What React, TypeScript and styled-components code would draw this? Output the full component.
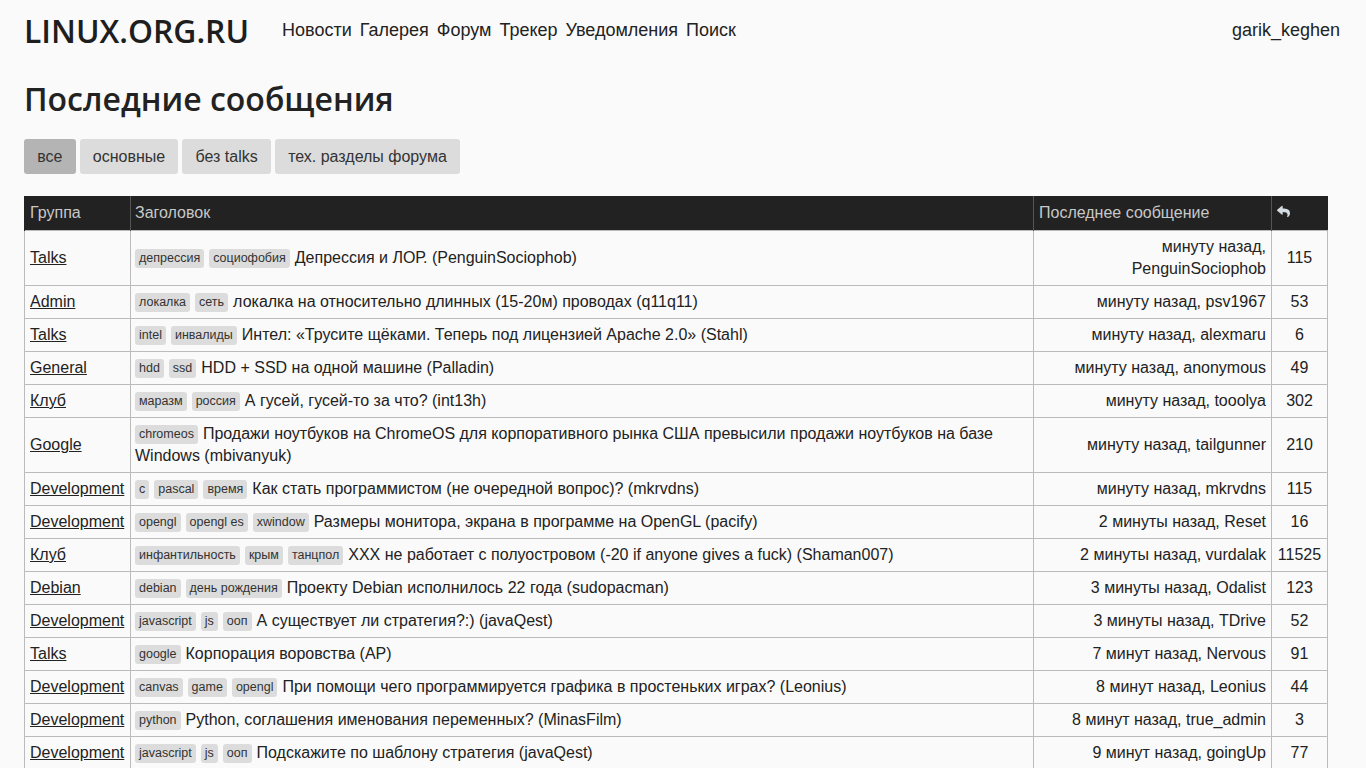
import styled, { createGlobalStyle } from "styled-components";
import { FaReply } from "react-icons/fa";

interface Topic {
  group: string;
  tags: string[];
  title: string;
  last: string;
  count: number;
}

const topics: Topic[] = [
  { group: "Talks", tags: ["депрессия", "социофобия"], title: "Депрессия и ЛОР. (PenguinSociophob)", last: "минуту назад, PenguinSociophob", count: 115 },
  { group: "Admin", tags: ["локалка", "сеть"], title: "локалка на относительно длинных (15-20м) проводах (q11q11)", last: "минуту назад, psv1967", count: 53 },
  { group: "Talks", tags: ["intel", "инвалиды"], title: "Интел: «Трусите щёками. Теперь под лицензией Apache 2.0» (Stahl)", last: "минуту назад, alexmaru", count: 6 },
  { group: "General", tags: ["hdd", "ssd"], title: "HDD + SSD на одной машине (Palladin)", last: "минуту назад, anonymous", count: 49 },
  { group: "Клуб", tags: ["маразм", "россия"], title: "А гусей, гусей-то за что? (int13h)", last: "минуту назад, tooolya", count: 302 },
  { group: "Google", tags: ["chromeos"], title: "Продажи ноутбуков на ChromeOS для корпоративного рынка США превысили продажи ноутбуков на базе Windows (mbivanyuk)", last: "минуту назад, tailgunner", count: 210 },
  { group: "Development", tags: ["c", "pascal", "время"], title: "Как стать программистом (не очередной вопрос)? (mkrvdns)", last: "минуту назад, mkrvdns", count: 115 },
  { group: "Development", tags: ["opengl", "opengl es", "xwindow"], title: "Размеры монитора, экрана в программе на OpenGL (pacify)", last: "2 минуты назад, Reset", count: 16 },
  { group: "Клуб", tags: ["инфантильность", "крым", "танцпол"], title: "XXX не работает с полуостровом (-20 if anyone gives a fuck) (Shaman007)", last: "2 минуты назад, vurdalak", count: 11525 },
  { group: "Debian", tags: ["debian", "день рождения"], title: "Проекту Debian исполнилось 22 года (sudopacman)", last: "3 минуты назад, Odalist", count: 123 },
  { group: "Development", tags: ["javascript", "js", "ооп"], title: "А существует ли стратегия?:) (javaQest)", last: "3 минуты назад, TDrive", count: 52 },
  { group: "Talks", tags: ["google"], title: "Корпорация воровства (AP)", last: "7 минут назад, Nervous", count: 91 },
  { group: "Development", tags: ["canvas", "game", "opengl"], title: "При помощи чего программируется графика в простеньких играх? (Leonius)", last: "8 минут назад, Leonius", count: 44 },
  { group: "Development", tags: ["python"], title: "Python, соглашения именования переменных? (MinasFilm)", last: "8 минут назад, true_admin", count: 3 },
  { group: "Development", tags: ["javascript", "js", "ооп"], title: "Подскажите по шаблону стратегия (javaQest)", last: "9 минут назад, goingUp", count: 77 },
  { group: "Linux-install", tags: ["ubuntu"], title: "Не загружается после обновления (vovan)", last: "10 минут назад, Deleted", count: 12 },
  { group: "Talks", tags: ["работа"], title: "Куда податься? (anonymous)", last: "11 минут назад, anonymous", count: 27 },
];

const filters = ["все", "основные", "без talks", "тех. разделы форума"];
const nav = ["Новости", "Галерея", "Форум", "Трекер", "Уведомления", "Поиск"];

export default function App() {
  return (
    <>
      <GlobalStyle />
      <Header>
        <Logo href="#">LINUX.ORG.RU</Logo>
        <Nav>
          {nav.map((n) => (
            <NavLink key={n} href="#">{n}</NavLink>
          ))}
        </Nav>
        <User href="#">garik_keghen</User>
      </Header>
      <Main>
        <Title>Последние сообщения</Title>
        <Filters>
          {filters.map((f, i) => (
            <FilterButton key={f} $active={i === 0}>{f}</FilterButton>
          ))}
        </Filters>
        <Table>
          <colgroup>
            <col style={{ width: 106 }} />
            <col />
            <col style={{ width: 238 }} />
            <col style={{ width: 56 }} />
          </colgroup>
          <thead>
            <tr>
              <Th>Группа</Th>
              <Th $tight>Заголовок</Th>
              <Th>Последнее сообщение</Th>
              <Th>
                <FaReply size={13} color="#d6dde2" />
              </Th>
            </tr>
          </thead>
          <tbody>
            {topics.map((t, i) => (
              <tr key={i}>
                <Td>
                  <GroupLink href="#">{t.group}</GroupLink>
                </Td>
                <Td $tight>
                  {t.tags.map((tag) => (
                    <Tag key={tag}>{tag}</Tag>
                  ))}
                  {t.title}
                </Td>
                <Td $align="right">{t.last}</Td>
                <Td $align="center">{t.count}</Td>
              </tr>
            ))}
          </tbody>
        </Table>
      </Main>
    </>
  );
}

const GlobalStyle = createGlobalStyle`
  body {
    margin: 0;
    background: #fafafa;
    color: #222;
    font-family: "Liberation Sans", Arial, sans-serif;
    font-size: 16px;
  }
  a {
    color: #222;
  }
`;

const Header = styled.header`
  display: flex;
  align-items: center;
  height: 60px;
  padding: 0 26px 0 24px;
`;

const Logo = styled.a`
  font-family: "Open Sans", sans-serif;
  font-size: 31.8px;
  font-weight: 600;
  text-decoration: none;
  color: #1e1e1e;
  margin-right: 33px;
`;

const Nav = styled.nav`
  display: flex;
  gap: 8px;
  flex: 1;
`;

const NavLink = styled.a`
  font-size: 18px;
  text-decoration: none;
  color: #222;
`;

const User = styled.a`
  font-size: 18px;
  text-decoration: none;
  color: #222;
`;

const Main = styled.main`
  padding: 0 38px 0 24px;
`;

const Title = styled.h1`
  font-family: "Open Sans", sans-serif;
  font-size: 32px;
  font-weight: 600;
  margin: 17px 0 19px;
  color: #222;
`;

const Filters = styled.div`
  display: flex;
  gap: 4px;
  margin-bottom: 22px;
`;

const FilterButton = styled.button<{ $active?: boolean }>`
  font-family: "Liberation Sans", Arial, sans-serif;
  font-size: 16px;
  color: #333;
  background: ${(p) => (p.$active ? "#b4b4b4" : "#dcdcdc")};
  border: none;
  border-radius: 3px;
  height: 35px;
  padding: 0 13.2px;
  cursor: pointer;
`;

const Table = styled.table`
  width: 100%;
  border-collapse: collapse;
  table-layout: fixed;
`;

const Th = styled.th<{ $tight?: boolean }>`
  background: #222;
  color: #c8c8c8;
  font-weight: normal;
  text-align: left;
  padding: 6px 5px 7px ${(p) => (p.$tight ? "4px" : "5px")};
  line-height: 21px;
  border-left: 1px solid #555;
  &:first-child {
    border-left: 1px solid #222;
  }
`;

const Td = styled.td<{ $align?: string; $tight?: boolean }>`
  border: 1px solid #bbb;
  padding: 5px 5px 5px ${(p) => (p.$tight ? "4px" : "5px")};
  line-height: 22px;
  text-align: ${(p) => p.$align || "left"};
  vertical-align: middle;
`;

const GroupLink = styled.a`
  color: #222;
  text-decoration: underline;
`;

const Tag = styled.span`
  display: inline-block;
  font-size: 12.5px;
  line-height: 19px;
  background: #dcdcdc;
  color: #333;
  border-radius: 3px;
  padding: 0 4px;
  margin-right: 5px;
  vertical-align: 1px;
`;
